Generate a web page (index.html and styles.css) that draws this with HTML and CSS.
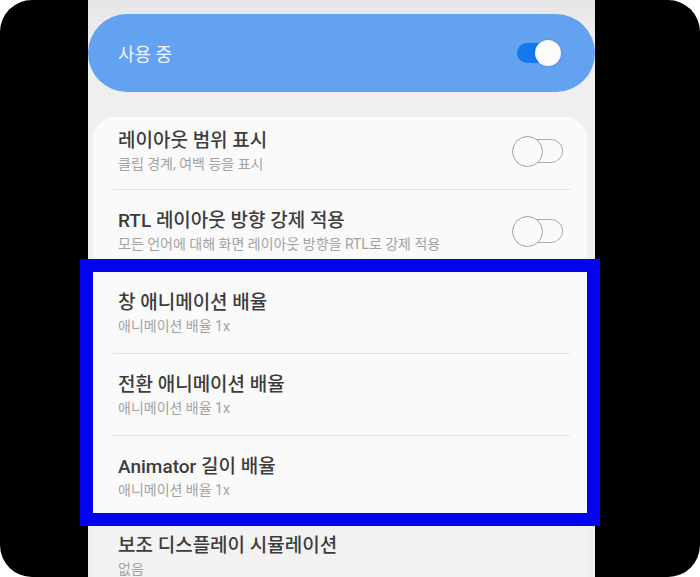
FILE: index.html
```html
<!DOCTYPE html>
<html lang="ko">
<head>
    <meta charset="UTF-8">
    <meta name="viewport" content="width=device-width, initial-scale=1.0">
    <title>개발자 옵션</title>
    <link rel="stylesheet" href="styles.css">
</head>
<body>
    <div class="frame">
        <div class="screen">
            <div class="master">
                <span>사용 중</span>
                <span class="switch on"></span>
            </div>

            <div class="card">
                <div class="row first">
                    <div class="text">
                        <div class="title">레이아웃 범위 표시</div>
                        <div class="sub">클립 경계, 여백 등을 표시</div>
                    </div>
                    <span class="switch"></span>
                </div>
                <div class="sep"></div>
                <div class="row">
                    <div class="text">
                        <div class="title">RTL 레이아웃 방향 강제 적용</div>
                        <div class="sub">모든 언어에 대해 화면 레이아웃 방향을 RTL로 강제 적용</div>
                    </div>
                    <span class="switch"></span>
                </div>
                <div class="sep"></div>

                <div class="group">
                    <div class="row">
                        <div class="text">
                            <div class="title">창 애니메이션 배율</div>
                            <div class="sub">애니메이션 배율 1x</div>
                        </div>
                    </div>
                    <div class="sep"></div>
                    <div class="row">
                        <div class="text">
                            <div class="title">전환 애니메이션 배율</div>
                            <div class="sub">애니메이션 배율 1x</div>
                        </div>
                    </div>
                    <div class="sep"></div>
                    <div class="row last">
                        <div class="text">
                            <div class="title">Animator 길이 배율</div>
                            <div class="sub">애니메이션 배율 1x</div>
                        </div>
                    </div>
                </div>
            </div>

            <div class="row dim">
                <div class="text">
                    <div class="title">보조 디스플레이 시뮬레이션</div>
                    <div class="sub">없음</div>
                </div>
            </div>
        </div>
    </div>
</body>
</html>
```

FILE: styles.css
```css
* {
    box-sizing: border-box;
}
body {
    margin: 0;
    background: #ffffff;
    font-family: Roboto, "Noto Sans CJK KR", sans-serif;
}
.frame {
    width: 700px;
    height: 577px;
    background: #000000;
    border-radius: 32px;
    overflow: hidden;
    display: flex;
}
.screen {
    width: 507px;
    margin-left: 88px;
    padding-top: 14px;
    background: linear-gradient(#e6e6e6, #efefef 40px, #efefef);
}
.master {
    height: 78px;
    border-radius: 39px;
    background: #62a2f0;
    display: flex;
    align-items: center;
    justify-content: space-between;
    padding: 0 38px 0 30px;
    color: #eef5fe;
    font-size: 18px;
}
.card {
    margin: 25px 8px 0 5px;
    background: #fafafa;
    border-radius: 22px 22px 0 0;
}
.row {
    display: flex;
    align-items: center;
    justify-content: space-between;
    height: 81px;
    padding: 18px 24px 18px 25px;
}
.row.first {
    height: 72px;
    padding-top: 11px;
    padding-bottom: 16px;
}
.row.last {
    height: 77px;
    padding-bottom: 14px;
}
.row.dim {
    margin: 0 8px 0 5px;
    padding-top: 21px;
    background: #f2f2f2;
}
.title {
    font-size: 19px;
    line-height: 26px;
    font-weight: 500;
    color: #3c3c3c;
    white-space: nowrap;
}
.sub {
    margin-top: 1px;
    font-size: 14px;
    line-height: 18px;
    color: #a2a2a2;
    white-space: nowrap;
}
.sep {
    height: 1px;
    margin: 0 17px 0 20px;
    background: #e3e3e3;
}
.group {
    outline: 13px solid #0303ef;
}
.switch {
    position: relative;
    flex: none;
    width: 50px;
    height: 24px;
    border: 1.5px solid #ababab;
    border-radius: 12px;
}
.switch::before {
    content: "";
    position: absolute;
    left: -2px;
    top: -4px;
    width: 29px;
    height: 29px;
    border: 1.5px solid #a3a3a3;
    border-radius: 50%;
    background: #fafafa;
}
.switch.on {
    width: 40px;
    height: 20px;
    border: none;
    border-radius: 10px;
    background: #1379ee;
}
.switch.on::before {
    left: auto;
    right: -4px;
    top: -3px;
    width: 26px;
    height: 26px;
    border: none;
    background: #fbfbfb;
    box-shadow: 0 0 2px rgba(0, 0, 0, 0.2);
}
```
